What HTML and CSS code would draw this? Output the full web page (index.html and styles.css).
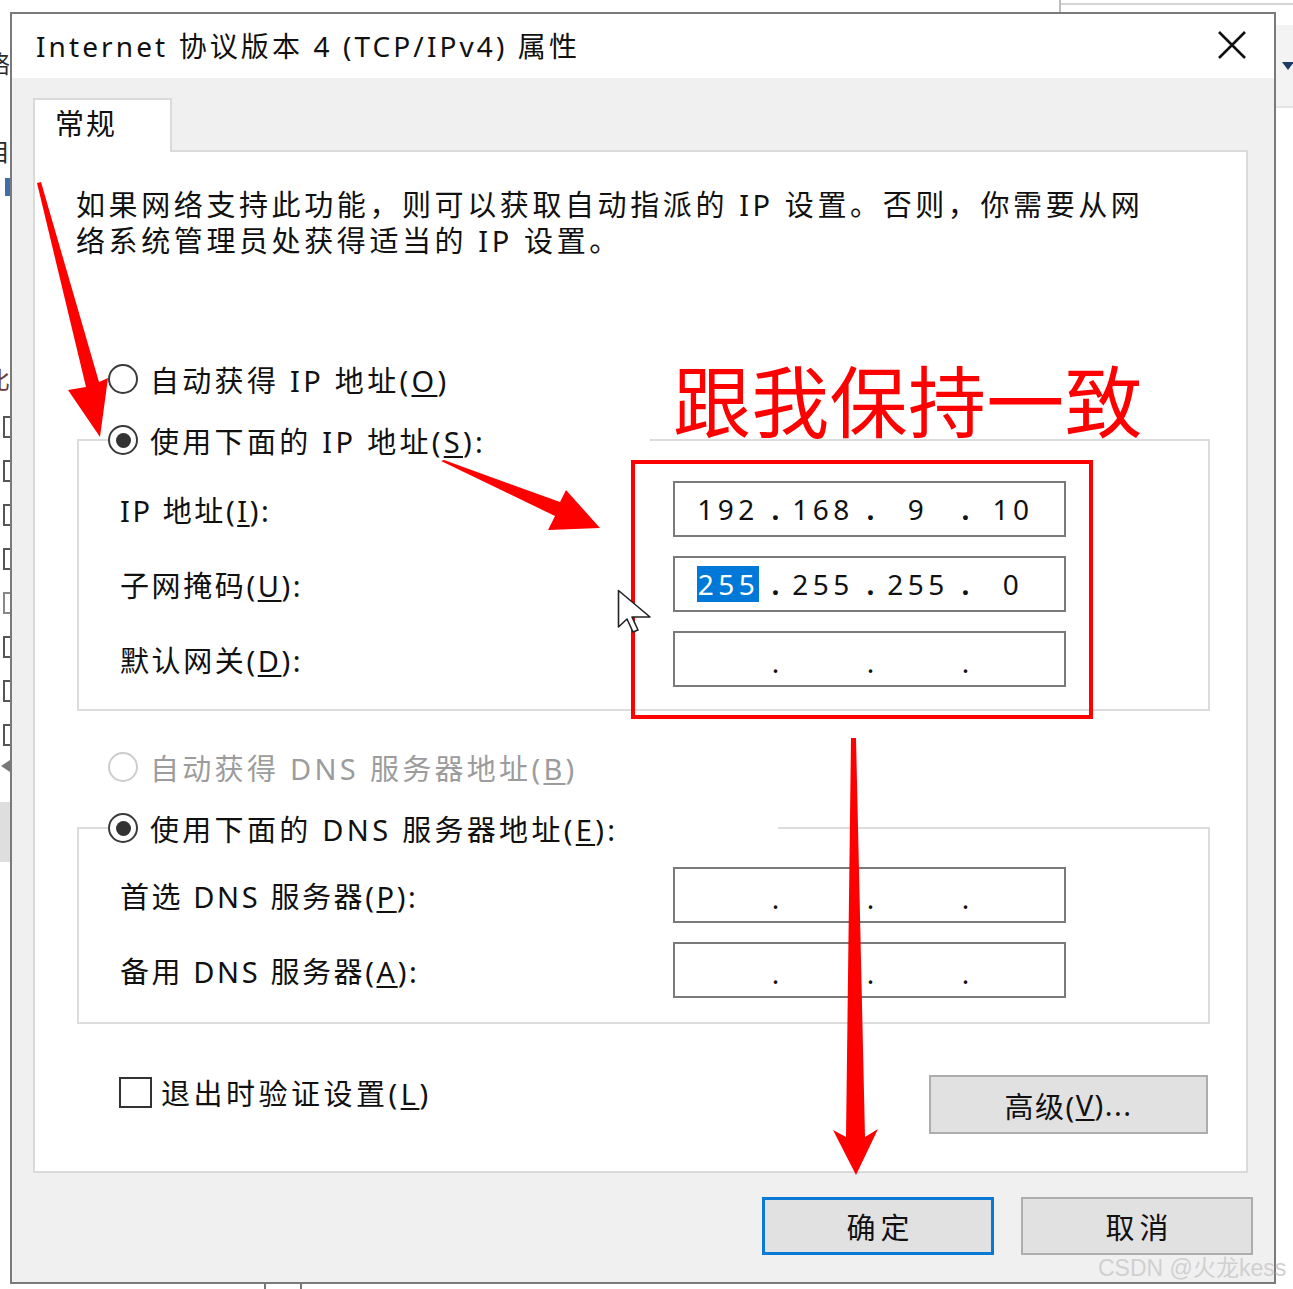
FILE: index.html
```html
<!DOCTYPE html>
<html lang="zh-CN">
<head>
<meta charset="utf-8">
<title>Internet 协议版本 4 (TCP/IPv4) 属性</title>
<link rel="stylesheet" href="styles.css">
</head>
<body>
<div class="screen">
  <div class="bg-left">
    <span class="frag-char f1">络</span>
    <span class="frag-char f2">目</span>
    <span class="frag-bar"></span>
    <span class="frag-char f3">比</span>
    <span class="frag-box"></span>
    <span class="frag-box"></span>
    <span class="frag-box"></span>
    <span class="frag-box"></span>
    <span class="frag-box empty"></span>
    <span class="frag-box"></span>
    <span class="frag-box"></span>
    <span class="frag-box"></span>
    <span class="frag-lt"></span>
    <span class="frag-block"></span>
  </div>
  <div class="bg-top"><span class="bg-top-line"></span></div>
  <div class="bg-right"><span class="bg-right-band"><span class="tri"></span></span></div>
  <div class="bg-bottom"><span class="tick"></span><span class="tick"></span></div>

  <div class="dialog">
    <div class="titlebar">
      <span class="title">Internet 协议版本 4 (TCP/IPv4) 属性</span>
      <svg class="close" width="30" height="30" viewBox="0 0 30 30" aria-hidden="true">
        <path d="M2 2 L28 28 M28 2 L2 28" stroke="#111" stroke-width="2.6" fill="none"/>
      </svg>
    </div>
    <div class="body">
      <div class="tab">常规</div>
      <div class="panel">
        <p class="desc">如果网络支持此功能，则可以获取自动指派的 IP 设置。否则，你需要从网<br>络系统管理员处获得适当的 IP 设置。</p>

        <div class="radio-row first">
          <span class="radio"></span>
          <span class="rlabel">自动获得 IP 地址(<u>O</u>)</span>
        </div>

        <div class="group group-ip">
          <div class="radio-row legend legend-ip">
            <span class="radio on"></span>
            <span class="rlabel">使用下面的 IP 地址(<u>S</u>):</span>
          </div>
          <div class="fields">
            <span class="flabel">IP 地址(<u>I</u>):</span>
            <div class="ip"><span>192</span><span class="dot">.</span><span>168</span><span class="dot">.</span><span>9</span><span class="dot">.</span><span>10</span></div>
            <span class="flabel">子网掩码(<u>U</u>):</span>
            <div class="ip"><span><span class="sel">255</span></span><span class="dot">.</span><span>255</span><span class="dot">.</span><span>255</span><span class="dot">.</span><span>0</span></div>
            <span class="flabel">默认网关(<u>D</u>):</span>
            <div class="ip empty"><span></span><span class="dot">.</span><span></span><span class="dot">.</span><span></span><span class="dot">.</span><span></span></div>
          </div>
        </div>

        <div class="radio-row dns-auto">
          <span class="radio disabled"></span>
          <span class="rlabel disabled-text">自动获得 DNS 服务器地址(<u>B</u>)</span>
        </div>

        <div class="group group-dns">
          <div class="radio-row legend legend-dns">
            <span class="radio on"></span>
            <span class="rlabel">使用下面的 DNS 服务器地址(<u>E</u>):</span>
          </div>
          <div class="fields">
            <span class="flabel">首选 DNS 服务器(<u>P</u>):</span>
            <div class="ip empty"><span></span><span class="dot">.</span><span></span><span class="dot">.</span><span></span><span class="dot">.</span><span></span></div>
            <span class="flabel">备用 DNS 服务器(<u>A</u>):</span>
            <div class="ip empty"><span></span><span class="dot">.</span><span></span><span class="dot">.</span><span></span><span class="dot">.</span><span></span></div>
          </div>
        </div>

        <div class="bottom-row">
          <div class="check-row">
            <span class="checkbox"></span>
            <span class="clabel">退出时验证设置(<u>L</u>)</span>
          </div>
          <button class="btn adv">高级(<u>V</u>)...</button>
        </div>
      </div>
      <div class="buttons">
        <button class="btn primary">确定</button>
        <button class="btn">取消</button>
      </div>
    </div>
  </div>

  <div class="note-box"></div>
  <div class="note-text">跟我保持一致</div>

  <svg class="overlay" width="1293" height="1289" viewBox="0 0 1293 1289" aria-hidden="true">
    <polygon fill="#ff0000" points="37,183 41,182 99,382 108,378 100,437 68,390 86,387"/>
    <polygon fill="#ff0000" points="441,461 444,460 560,502 566,490 600,528 548,530 555,516"/>
    <polygon fill="#ff0000" points="851,738 856,738 865,1137 878,1129 856,1175 833,1130 846,1137"/>
    <path d="M618.5 590.5 V627 L627 619 L633 632 L638 630 L632 617 L650 617 Z" fill="#fff" stroke="#222" stroke-width="1.6" stroke-linejoin="round"/>
  </svg>

  <div class="watermark">CSDN @火龙kess</div>
</div>
</body>
</html>
```

FILE: styles.css
```css
* { box-sizing: border-box; }

html, body {
  margin: 0;
  padding: 0;
  background: #fff;
}

body {
  font-family: "Noto Sans", "Noto Sans CJK SC", sans-serif;
  color: #111;
}

.screen {
  position: relative;
  width: 1293px;
  height: 1289px;
  overflow: hidden;
  background: #fff;
}

/* ---------- background window fragments ---------- */
.bg-left {
  position: absolute;
  left: 0;
  top: 0;
  width: 11px;
  height: 1289px;
  display: flex;
  flex-direction: column;
  align-items: flex-start;
  overflow: hidden;
  border-top: 28px solid #fff;
}

.frag-char {
  font-family: "Noto Sans CJK SC", sans-serif;
  font-size: 24px;
  line-height: 30px;
  color: #2a2a2a;
  margin-left: -14px;
}
.f1 { margin-top: 20px; }
.f2 { margin-top: 58px; }
.f3 { margin-top: 168px; color: #6b3a3a; }

.frag-bar {
  display: block;
  width: 5px;
  height: 18px;
  margin-left: 5px;
  margin-top: 12px;
  background: #3e6fa8;
}

.frag-box {
  display: block;
  width: 14px;
  height: 22px;
  margin-left: 3px;
  margin-top: 22px;
  border: 2px solid #555;
  background: #fff;
}
.frag-box:first-of-type { margin-top: 24px; }
.frag-box.empty { border-color: #888; }

.frag-lt {
  display: block;
  width: 0;
  height: 0;
  margin-top: 14px;
  margin-left: 1px;
  border-top: 6px solid transparent;
  border-bottom: 6px solid transparent;
  border-right: 9px solid #777;
}

.frag-block {
  display: block;
  width: 11px;
  height: 60px;
  margin-top: 30px;
  background: #dedede;
}

.bg-top {
  position: absolute;
  left: 1059px;
  top: 0;
  width: 234px;
  height: 12px;
  border-left: 2px solid #bdbdbd;
}
.bg-top-line {
  display: block;
  margin-top: 3px;
  height: 2px;
  background: #d6d6d6;
}

.bg-right {
  position: absolute;
  left: 1276px;
  top: 12px;
  width: 17px;
  height: 1272px;
  background: #fff;
}
.bg-right-band {
  display: block;
  margin-top: 13px;
  height: 83px;
  background: #f3f3f3;
  border-bottom: 2px solid #e3e3e3;
  padding-top: 37px;
  padding-left: 6px;
}
.tri {
  display: block;
  width: 0;
  height: 0;
  border-left: 6px solid transparent;
  border-right: 6px solid transparent;
  border-top: 8px solid #1f3c66;
}

.bg-bottom {
  position: absolute;
  left: 0;
  top: 1284px;
  width: 1293px;
  height: 5px;
  display: flex;
  gap: 34px;
  padding-left: 264px;
}
.tick {
  width: 2px;
  height: 5px;
  background: #777;
}

/* ---------- dialog ---------- */
.dialog {
  position: absolute;
  left: 10px;
  top: 12px;
  width: 1266px;
  height: 1272px;
  border: 2px solid #7a7a7a;
  background: #f0f0f0;
  display: flex;
  flex-direction: column;
}

.titlebar {
  height: 64px;
  flex: none;
  background: #fff;
  display: flex;
  align-items: center;
  justify-content: space-between;
  padding: 0 27px 2px 24px;
}

.title {
  font-size: 28px;
  letter-spacing: 3.1px;
  color: #111;
  white-space: nowrap;
}

.close { display: block; }

.body {
  flex: 1;
  padding: 20px 26px 0 21px;
  display: flex;
  flex-direction: column;
}

.tab {
  position: relative;
  z-index: 1;
  width: 139px;
  height: 54px;
  background: #fff;
  border: 2px solid #dadada;
  border-bottom: none;
  margin-bottom: -2px;
  padding-left: 20px;
  font-size: 29px;
  line-height: 48px;
  letter-spacing: 2px;
  color: #111;
}

.panel {
  height: 1023px;
  flex: none;
  background: #fff;
  border: 2px solid #dadada;
  display: flex;
  flex-direction: column;
}

.desc {
  margin: 35px 0 0 41px;
  font-size: 29px;
  line-height: 36px;
  letter-spacing: 3.6px;
  white-space: nowrap;
  color: #111;
}

/* radios */
.radio-row {
  display: flex;
  align-items: center;
  height: 40px;
  gap: 12px;
  font-size: 29px;
  letter-spacing: 3.3px;
  white-space: nowrap;
}
.radio-row.first { margin: 100px 0 0 73px; }
.radio-row.dns-auto { margin: 36px 0 0 73px; }

.radio {
  flex: none;
  width: 30px;
  height: 30px;
  border-radius: 50%;
  border: 2px solid #3a3a3a;
  background: #fff;
  display: flex;
  align-items: center;
  justify-content: center;
}
.radio.on::after {
  content: "";
  width: 15px;
  height: 15px;
  border-radius: 50%;
  background: #333;
}
.radio.disabled { border-color: #cdcdcd; }

.disabled-text { color: #9c9c9c; }

u { text-decoration-thickness: 2px; text-underline-offset: 3px; }

/* group boxes */
.group {
  margin-left: 42px;
  width: 1133px;
  border: 2px solid #dcdcdc;
  display: flex;
  flex-direction: column;
}
.group-ip { margin-top: 40px; padding-bottom: 22px; }
.group-dns { margin-top: 40px; padding-bottom: 24px; }

.legend {
  margin: -21px 0 0 29px;
  background: #fff;
}
.legend-ip { width: 542px; }
.legend-dns { width: 670px; }

.fields {
  display: grid;
  grid-template-columns: 553px 393px;
  row-gap: 19px;
  align-items: center;
  padding-left: 41px;
}
.group-ip .fields { margin-top: 21px; }
.group-dns .fields { margin-top: 19px; }

.flabel {
  font-size: 29px;
  letter-spacing: 2.6px;
  white-space: nowrap;
  color: #111;
}

.ip {
  height: 56px;
  border: 2px solid #7a7a7a;
  background: #fff;
  display: grid;
  grid-template-columns: 80px 15px 80px 15px 80px 15px 80px;
  align-items: center;
  justify-items: center;
  padding-left: 13px;
  font-size: 28px;
  letter-spacing: 4.5px;
  color: #111;
}
.ip > span { line-height: 36px; }
.ip .dot { letter-spacing: 0; font-weight: 700; }
.ip.empty .dot { padding-top: 6px; font-weight: 400; }

.sel {
  display: inline-block;
  background: #0078d7;
  color: #fff;
  padding: 0 0 0 1px;
  height: 36px;
}

/* bottom row */
.bottom-row {
  margin-top: 51px;
  display: flex;
  justify-content: space-between;
  align-items: flex-start;
  padding: 0 38px 0 84px;
}

.check-row {
  display: flex;
  align-items: center;
  gap: 9px;
  margin-top: 1px;
  height: 32px;
}
.checkbox {
  width: 33px;
  height: 31px;
  border: 2px solid #333;
  background: #fff;
}
.clabel {
  font-size: 29px;
  letter-spacing: 3.5px;
  white-space: nowrap;
}

.btn {
  font-family: "Noto Sans", "Noto Sans CJK SC", sans-serif;
  font-size: 29px;
  letter-spacing: 3px;
  color: #111;
  background: #e1e1e1;
  border: 2px solid #adadad;
  padding: 0;
  display: flex;
  align-items: center;
  justify-content: center;
}
.btn.adv { width: 279px; height: 59px; letter-spacing: 1.5px; }

.buttons {
  margin-top: 24px;
  margin-right: -5px;
  display: flex;
  justify-content: flex-end;
  gap: 27px;
}
.buttons .btn { width: 232px; height: 58px; letter-spacing: 5px; padding-left: 5px; }
.btn.primary { border: 3px solid #0a79d6; }

/* ---------- annotations ---------- */
.note-box {
  position: absolute;
  left: 631px;
  top: 460px;
  width: 462px;
  height: 259px;
  border: 4px solid #ff0000;
}

.note-text {
  position: absolute;
  left: 673px;
  top: 358px;
  font-family: "Noto Sans CJK SC", sans-serif;
  font-size: 78px;
  line-height: 80px;
  letter-spacing: 0.3px;
  color: #ff0000;
  white-space: nowrap;
}

.overlay {
  position: absolute;
  left: 0;
  top: 0;
  pointer-events: none;
}

.watermark {
  position: absolute;
  left: 1098px;
  top: 1253px;
  font-family: "Liberation Sans", "Noto Sans CJK SC", sans-serif;
  font-size: 23px;
  line-height: 30px;
  color: #d0d0d0;
  white-space: nowrap;
}
```
